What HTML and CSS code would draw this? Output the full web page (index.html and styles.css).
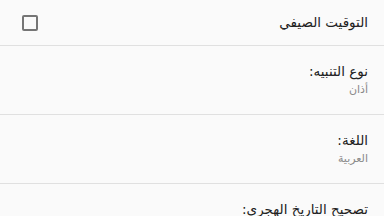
FILE: index.html
```html
<!DOCTYPE html>
<html lang="ar" dir="rtl">
<head>
    <meta charset="UTF-8">
    <meta name="viewport" content="width=device-width, initial-scale=1.0">
    <title>الإعدادات</title>
    <link rel="stylesheet" href="styles.css">
</head>
<body>
    <div class="settings">
        <!-- checkbox row -->
        <div class="pref pref-check">
            <span class="pref-title">التوقيت الصيفي</span>
            <span class="checkbox"></span>
        </div>

        <div class="pref pref-list">
            <span class="pref-title">نوع التنبيه:</span>
            <span class="pref-summary">أذان</span>
        </div>

        <div class="pref pref-list">
            <span class="pref-title">اللغة:</span>
            <span class="pref-summary">العربية</span>
        </div>

        <div class="pref pref-list">
            <span class="pref-title">تصحيح التاريخ الهجري:</span>
        </div>
    </div>
</body>
</html>
```

FILE: styles.css
```css
body {
    margin: 0;
    background-color: #fafafa;
    font-family: "DejaVu Sans", "Noto Sans", sans-serif;
    color: #212121;
    overflow: hidden;
}

.settings {
    display: flex;
    flex-direction: column;
}

.pref {
    border-bottom: 1px solid #e0e0e0;
    padding: 0 16px 0 22px;
    box-sizing: border-box;
}

.pref-check {
    height: 46px;
    display: flex;
    align-items: center;
    justify-content: space-between;
}

.pref-list {
    height: 69px;
    padding-top: 16px;
    display: flex;
    flex-direction: column;
    align-items: flex-start;
}

.pref-list:last-child {
    border-bottom: none;
}

.pref-title {
    font-size: 13.5px;
    line-height: 19px;
}

.pref-summary {
    font-size: 11px;
    line-height: 16px;
    margin-top: 1px;
    color: #8a8a8a;
}

.checkbox {
    width: 12px;
    height: 12px;
    border: 2px solid #757575;
    border-radius: 2px;
}
```
